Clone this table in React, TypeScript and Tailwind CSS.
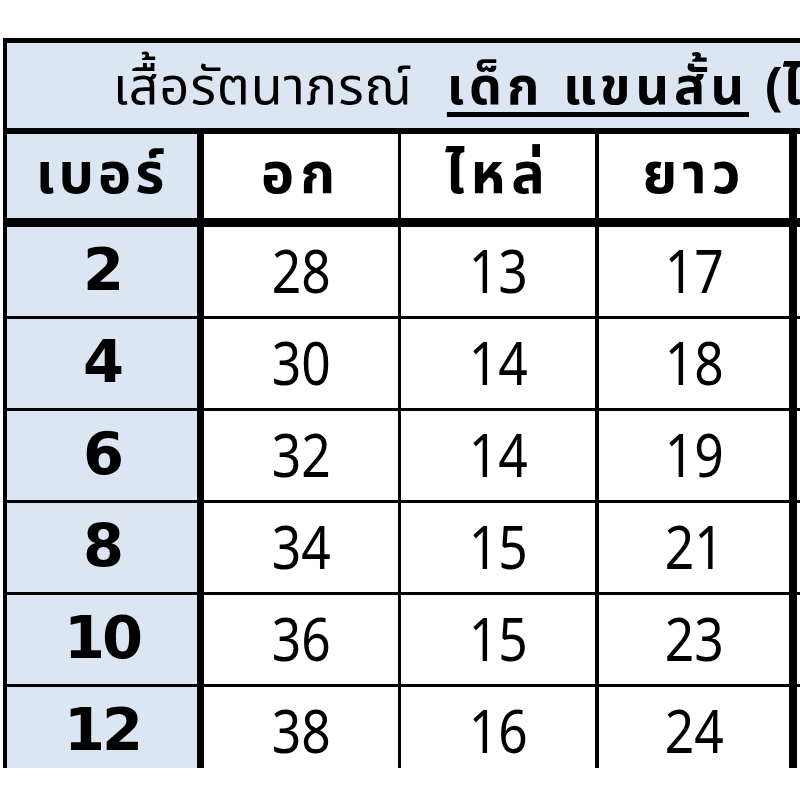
const rows = [
  { size: "2", chest: "28", shoulder: "13", length: "17" },
  { size: "4", chest: "30", shoulder: "14", length: "18" },
  { size: "6", chest: "32", shoulder: "14", length: "19" },
  { size: "8", chest: "34", shoulder: "15", length: "21" },
  { size: "10", chest: "36", shoulder: "15", length: "23" },
  { size: "12", chest: "38", shoulder: "16", length: "24" },
];

const thai = "font-['Tahoma','Noto_Sans_Thai','Noto_Sans','DejaVu_Sans',sans-serif]";

const Num = ({ value }: { value: string }) => (
  <span className="inline-block scale-x-[0.86] -translate-y-[2px] font-['Noto_Sans',sans-serif] text-[60px] leading-none">
    {value}
  </span>
);

const App = () => {
  return (
    <div className="w-[800px] h-[800px] bg-white overflow-hidden pt-[38px] pl-[3px]">
      <div className="h-[730px] overflow-hidden">
        <div className={`w-[1000px] border-t-[5px] border-l-[4px] border-black text-black ${thai}`}>
          {/* title */}
          <div className="h-[91px] border-b-[6px] border-black bg-[#dce6f2] flex items-center pl-[106px] whitespace-nowrap text-[52px] leading-none">
            <span className="tracking-[1px] translate-y-[2px]">เสื้อรัตนาภรณ์</span>
            <span className="ml-[34px] font-bold tracking-[5px] underline decoration-[5px] underline-offset-[8px] translate-y-[2px]">เด็ก แขนสั้น</span>
            <span className="ml-[16px] font-bold translate-y-[2px]">(ไซส์ไทย)</span>
          </div>

          {/* header */}
          <div className="flex h-[93px] border-b-[9px] border-black text-[56px] font-bold leading-none">
            <div className="w-[197px] border-r-[7px] border-black bg-[#dce6f2] flex items-center justify-center tracking-[4px]">เบอร์</div>
            <div className="w-[197px] border-r-[3px] border-black bg-white flex items-center justify-center tracking-[6px]">อก</div>
            <div className="w-[198px] border-r-[4px] border-black bg-white flex items-center justify-center tracking-[6px]">ไหล่</div>
            <div className="w-[198px] border-r-[8px] border-black bg-white flex items-center justify-center tracking-[5px]">ยาว</div>
            <div className="flex-1 bg-white" />
          </div>

          {/* body */}
          {rows.map((r) => (
            <div key={r.size} className="flex h-[92px] border-b-[3px] border-black leading-none">
              <div className="w-[197px] border-r-[7px] border-black bg-[#dce6f2] flex items-center justify-center">
                <span className="-translate-y-[2px] font-['DejaVu_Sans',sans-serif] font-bold text-[59px] tracking-[-3px]">{r.size}</span>
              </div>
              <div className="w-[197px] border-r-[3px] border-black bg-white flex items-center justify-center">
                <Num value={r.chest} />
              </div>
              <div className="w-[198px] border-r-[4px] border-black bg-white flex items-center justify-center">
                <Num value={r.shoulder} />
              </div>
              <div className="w-[198px] border-r-[8px] border-black bg-white flex items-center justify-center">
                <Num value={r.length} />
              </div>
              <div className="flex-1 bg-white" />
            </div>
          ))}
        </div>
      </div>
    </div>
  );
};

export default App;
